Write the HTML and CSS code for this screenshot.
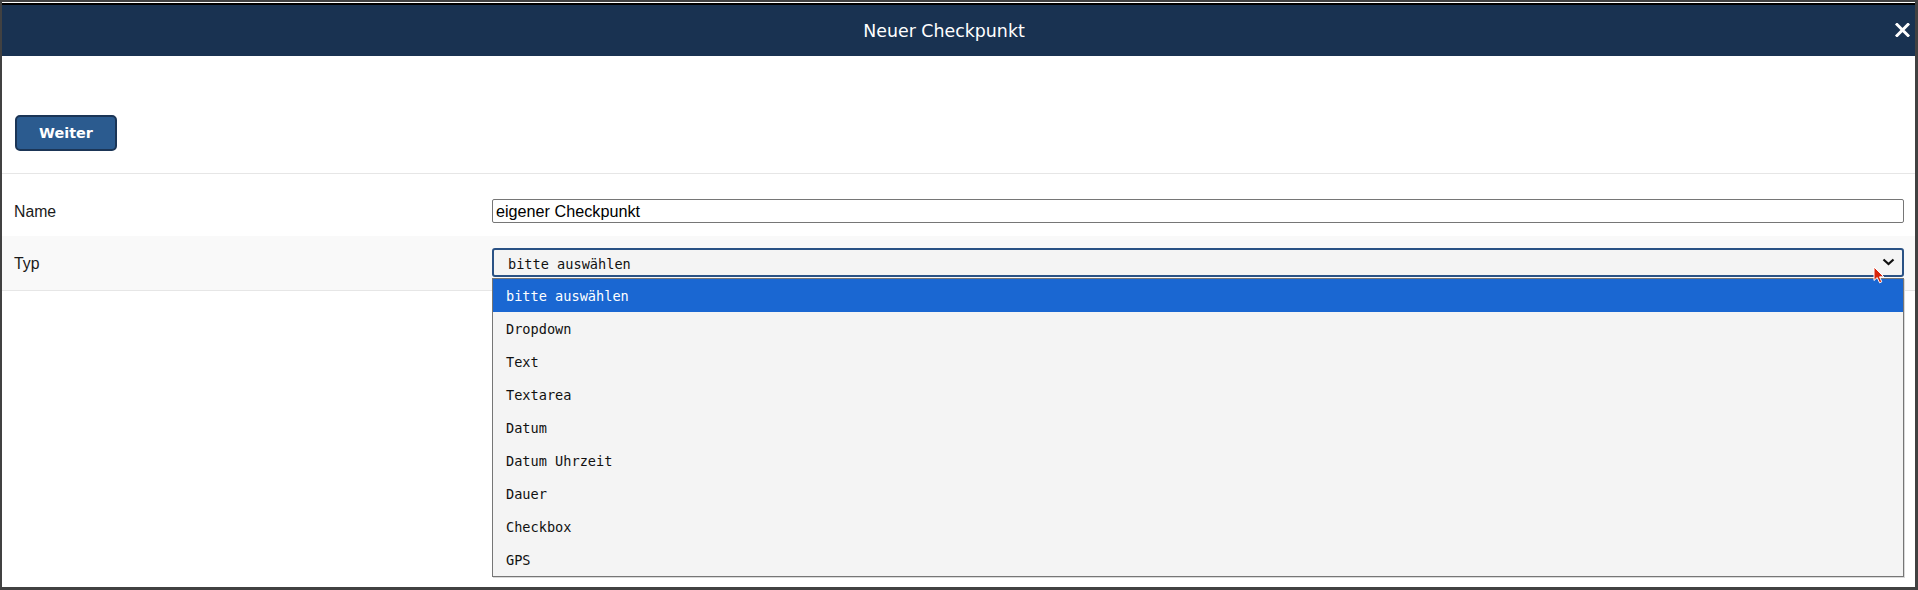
FILE: index.html
```html
<!DOCTYPE html>
<html lang="de">
<head>
<meta charset="utf-8">
<title>Neuer Checkpunkt</title>
<link rel="stylesheet" href="styles.css">
</head>
<body>
<div class="dialog">
  <header class="dialog-head">
    <h1 class="dialog-title">Neuer Checkpunkt</h1>
    <button class="dialog-close" type="button" aria-label="Schließen">
      <svg width="15" height="14" viewBox="0 0 15 14"><path d="M2 1.5 L13 12.5 M13 1.5 L2 12.5" stroke="#fff" stroke-width="3" stroke-linecap="square"/></svg>
    </button>
  </header>

  <div class="toolbar">
    <button class="btn-primary" type="button">Weiter</button>
  </div>

  <div class="form">
    <div class="form-row row-name">
      <label class="form-label">Name</label>
      <div class="form-control">
        <input class="text-input" type="text" value="eigener Checkpunkt">
      </div>
    </div>
    <div class="form-row row-type">
      <label class="form-label">Typ</label>
      <div class="form-control select-wrap">
        <div class="select-box">
          <span class="select-value">bitte auswählen</span>
          <svg class="chevron" width="13" height="8" viewBox="0 0 13 8"><path d="M1.5 1.5 L6.5 6 L11.5 1.5" fill="none" stroke="#111" stroke-width="2.2"/></svg>
        </div>
        <ul class="options">
          <li class="option selected">bitte auswählen</li>
          <li class="option">Dropdown</li>
          <li class="option">Text</li>
          <li class="option">Textarea</li>
          <li class="option">Datum</li>
          <li class="option">Datum Uhrzeit</li>
          <li class="option">Dauer</li>
          <li class="option">Checkbox</li>
          <li class="option">GPS</li>
        </ul>
        <svg class="pointer" width="13" height="18" viewBox="0 0 13 18"><path d="M1 1 L1 14.5 L4.2 11.6 L6.6 16.8 L8.8 15.8 L6.5 10.8 L10.8 10.8 Z" fill="#d8250c" stroke="#fff" stroke-width="1"/></svg>
      </div>
    </div>
  </div>
</div>
</body>
</html>
```

FILE: styles.css
```css
* {
  box-sizing: border-box;
}

html, body {
  margin: 0;
  height: 590px;
  overflow: hidden;
}

body {
  background: #414141;
  padding: 2px 3px 3px 2px;
  font-family: "Liberation Sans", Arial, sans-serif;
}

.dialog {
  height: 100%;
  background: #fff;
  border-top: 1px solid #fff;
  display: flex;
  flex-direction: column;
}

/* title bar */
.dialog-head {
  height: 53px;
  border-top: 2px solid #000;
  background: #193251;
  display: flex;
  align-items: center;
}

.dialog-title {
  flex: 1;
  margin: 0;
  text-align: center;
  color: #fff;
  font-family: "DejaVu Sans", Verdana, sans-serif;
  font-weight: normal;
  font-size: 17.4px;
  line-height: 20px;
  padding-top: 1px;
}

.dialog-close {
  width: 29px;
  padding: 0 5px 0 9px;
  margin: 0;
  border: 0;
  background: none;
  display: flex;
  align-items: center;
  justify-content: flex-end;
  height: 14px;
  margin-top: -1px;
}

/* action bar */
.toolbar {
  height: 118px;
  padding: 59px 0 0 13px;
  border-bottom: 1px solid #e6e6e6;
}

.btn-primary {
  width: 102px;
  height: 36px;
  margin: 0;
  border: 2px solid #1b3556;
  border-radius: 5px;
  background: #2b5b8f;
  color: #fff;
  font-family: "DejaVu Sans", Verdana, sans-serif;
  font-weight: bold;
  font-size: 14.4px;
  padding: 0 0 1px;
}

/* form table */
.form-row {
  display: flex;
  align-items: center;
  padding: 0 11px 0 12px;
}

.row-name {
  height: 62px;
  padding-top: 25px;
  padding-bottom: 13px;
}

.row-type {
  height: 55px;
  padding-top: 12px;
  padding-bottom: 13px;
  background: #f9f9f9;
  border-bottom: 1px solid #e6e6e6;
}

.form-label {
  width: 478px;
  flex: none;
  font-size: 15.8px;
  color: #1a1a1a;
  padding-top: 2px;
}

.form-control {
  flex: 1;
}

.text-input {
  display: block;
  width: 100%;
  height: 24px;
  margin: 0;
  border: 1px solid #767676;
  border-radius: 2px;
  padding: 0 3px;
  font-family: "Liberation Sans", Arial, sans-serif;
  font-size: 16.2px;
  color: #000;
  background: #fff;
}

/* open select */
.select-wrap {
  position: relative;
}

.select-box {
  height: 29px;
  border: 2px solid #2a5285;
  border-radius: 3px;
  background: #f4f4f4;
  display: flex;
  align-items: center;
  justify-content: space-between;
  padding: 0 7px 0 14px;
  font-family: "DejaVu Sans Mono", monospace;
  font-size: 13.6px;
  color: #111;
}

.select-value {
  padding-top: 2px;
}

.chevron {
  display: block;
  margin-top: -2px;
}

.options {
  position: absolute;
  left: 0;
  right: 0;
  top: 30px;
  margin: 0;
  padding: 0;
  list-style: none;
  background: #f4f4f4;
  border: 1px solid #767676;
  box-shadow: 1px 1px 0 #d9d9d9;
  z-index: 2;
}

.option {
  height: 33px;
  line-height: 31px;
  padding: 2px 0 0 13px;
  font-family: "DejaVu Sans Mono", monospace;
  font-size: 13.6px;
  color: #111;
}

.option.selected {
  background: #1a67d2;
  color: #fff;
}

.pointer {
  position: absolute;
  right: 18px;
  top: 18px;
  z-index: 3;
}
```
